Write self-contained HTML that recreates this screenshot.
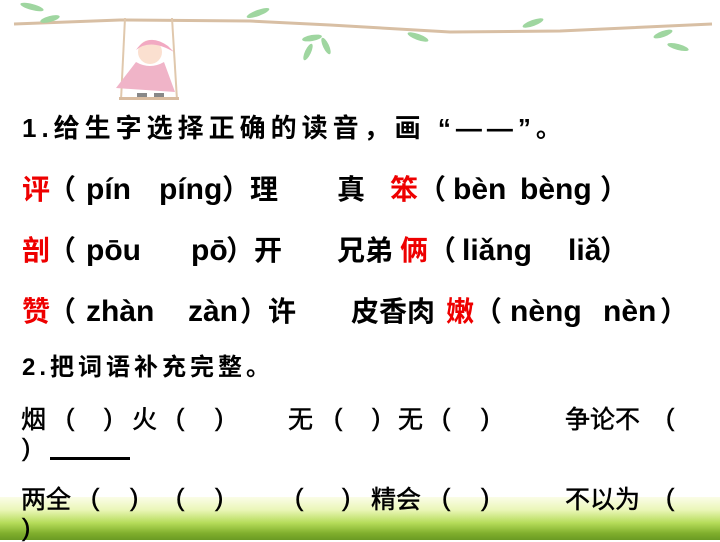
<!DOCTYPE html>
<html><head><meta charset="utf-8"><style>
body{margin:0;width:720px;height:540px;overflow:hidden;background:#fff;position:relative;font-family:"Liberation Sans","Noto Sans CJK SC",sans-serif;}
.t{position:absolute;white-space:pre;font-weight:bold;color:#000;line-height:1;}
.r{color:#e00;}
.c{font-size:28px;}
.l{font-size:30px;}
.s{position:absolute;white-space:pre;font-size:25px;line-height:1;color:#000;-webkit-text-stroke:0.5px #000;}
</style></head><body>
<div style="position:absolute;left:0;top:497px;width:720px;height:43px;background:linear-gradient(180deg,#fbfde8 0%,#eaf6b8 30%,#b6dc5a 60%,#7fae2c 85%,#6a9a24 100%);"></div>
<svg style="position:absolute;left:0;top:0" width="720" height="100">
<path d="M14 24 L120 20 L250 21 L330 25 L450 32 L560 31 L712 24" stroke="#d8bfa4" stroke-width="3" fill="none"/>
<g fill="#9fd6a0">
<ellipse cx="32" cy="7" rx="12" ry="3" transform="rotate(15 32 7)"/>
<ellipse cx="50" cy="19" rx="10" ry="3" transform="rotate(-15 50 19)"/>
<ellipse cx="258" cy="13" rx="12" ry="3" transform="rotate(-20 258 13)"/>
<ellipse cx="312" cy="38" rx="10" ry="3" transform="rotate(-10 312 38)"/>
<ellipse cx="308" cy="52" rx="3" ry="9" transform="rotate(25 308 52)"/>
<ellipse cx="326" cy="46" rx="3" ry="9" transform="rotate(-25 326 46)"/>
<ellipse cx="418" cy="37" rx="11" ry="3" transform="rotate(20 418 37)"/>
<ellipse cx="533" cy="23" rx="11" ry="3" transform="rotate(-20 533 23)"/>
<ellipse cx="663" cy="34" rx="10" ry="3" transform="rotate(-20 663 34)"/>
<ellipse cx="678" cy="47" rx="11" ry="3" transform="rotate(15 678 47)"/>
</g>
<g stroke="#e0c8ad" stroke-width="2"><line x1="125" y1="18" x2="121" y2="100"/><line x1="172" y1="18" x2="177" y2="100"/></g>
<rect x="119" y="97" width="60" height="4" fill="#d9bca0"/>
<path d="M136 62 Q150 70 164 62 L175 92 L116 88 Z" fill="#f0b4c8"/>
<rect x="137" y="93" width="10" height="4" fill="#888"/><rect x="154" y="93" width="10" height="4" fill="#888"/>
<circle cx="150" cy="52" r="12" fill="#fbe0d0"/>
<path d="M136 50 Q148 32 168 46 L174 52 Q150 38 136 50Z" fill="#f2a9c2"/>
</svg>
<div class="t" style="left:22px;top:115px;font-size:26px;letter-spacing:5px">1.给生字选择正确的读音，画 “——”。</div>

<div class="t c r" style="left:22px;top:176px">评</div><div class="t c" style="left:48px;top:176px">（</div>
<div class="t l" style="left:86px;top:175px">pín</div><div class="t l" style="left:159px;top:175px">píng</div>
<div class="t c" style="left:222px;top:176px">）理</div><div class="t c" style="left:337px;top:176px">真</div>
<div class="t c r" style="left:390px;top:176px">笨</div><div class="t c" style="left:418px;top:176px">（</div>
<div class="t l" style="left:453px;top:175px">bèn</div><div class="t l" style="left:520px;top:175px">bèng</div>
<div class="t c" style="left:600px;top:176px">）</div>

<div class="t c r" style="left:22px;top:237px">剖</div><div class="t c" style="left:48px;top:237px">（</div>
<div class="t l" style="left:86px;top:236px">pōu</div><div class="t l" style="left:191px;top:236px">pō</div>
<div class="t c" style="left:226px;top:237px">）开</div><div class="t c" style="left:337px;top:237px">兄弟</div>
<div class="t c r" style="left:400px;top:237px">俩</div><div class="t c" style="left:428px;top:237px">（</div>
<div class="t l" style="left:462px;top:236px">liǎng</div><div class="t l" style="left:568px;top:236px">liǎ</div>
<div class="t c" style="left:600px;top:237px">）</div>

<div class="t c r" style="left:22px;top:298px">赞</div><div class="t c" style="left:48px;top:298px">（</div>
<div class="t l" style="left:86px;top:297px">zhàn</div><div class="t l" style="left:188px;top:297px">zàn</div>
<div class="t c" style="left:240px;top:298px">）许</div><div class="t c" style="left:351px;top:298px">皮香肉</div>
<div class="t c r" style="left:446px;top:298px">嫩</div><div class="t c" style="left:474px;top:298px">（</div>
<div class="t l" style="left:510px;top:297px">nèng</div><div class="t l" style="left:603px;top:297px">nèn</div>
<div class="t c" style="left:660px;top:298px">）</div>

<div class="t" style="left:22px;top:356px;font-size:24px;letter-spacing:4px">2.把词语补充完整。</div>

<div class="s" style="left:21px;top:408px">烟</div><div class="s" style="left:66px;top:406px">(</div><div class="s" style="left:104px;top:406px">)</div>
<div class="s" style="left:132px;top:408px">火</div><div class="s" style="left:176px;top:406px">(</div><div class="s" style="left:215px;top:406px">)</div>
<div class="s" style="left:288px;top:408px">无</div><div class="s" style="left:334px;top:406px">(</div><div class="s" style="left:372px;top:406px">)</div>
<div class="s" style="left:398px;top:408px">无</div><div class="s" style="left:442px;top:406px">(</div><div class="s" style="left:481px;top:406px">)</div>
<div class="s" style="left:565px;top:408px">争论不</div><div class="s" style="left:666px;top:406px">(</div>
<div class="s" style="left:22px;top:436px">)</div>
<div style="position:absolute;left:50px;top:457px;width:80px;height:3px;background:#000"></div>

<div class="s" style="left:21px;top:488px">两全</div><div class="s" style="left:91px;top:486px">(</div><div class="s" style="left:130px;top:486px">)</div>
<div class="s" style="left:176px;top:486px">(</div><div class="s" style="left:215px;top:486px">)</div>
<div class="s" style="left:295px;top:486px">(</div><div class="s" style="left:342px;top:486px">)</div>
<div class="s" style="left:371px;top:488px">精会</div><div class="s" style="left:442px;top:486px">(</div><div class="s" style="left:481px;top:486px">)</div>
<div class="s" style="left:565px;top:488px">不以为</div><div class="s" style="left:666px;top:486px">(</div>
<div class="s" style="left:22px;top:516px">)</div>
</body></html>
